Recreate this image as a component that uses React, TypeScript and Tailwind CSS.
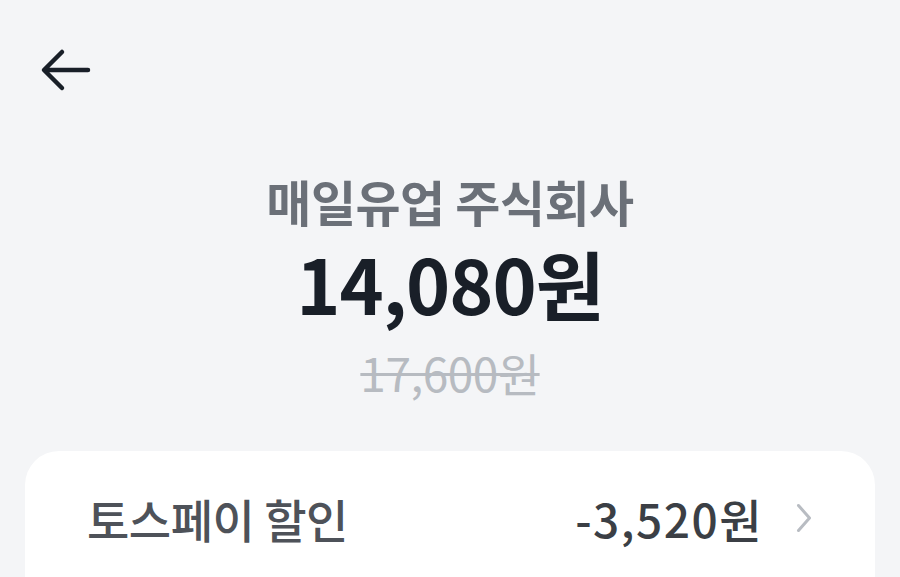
const font = { fontFamily: '"Noto Sans CJK KR", "Noto Sans", sans-serif' };

export default function App() {
  return (
    <main
      className="h-[577px] w-[900px] overflow-hidden bg-[#f4f5f7] text-[#191f28]"
      style={font}
    >
      <header className="flex h-[140px] items-start px-[40px] pt-[46px]">
        <button className="text-[#191f28]">
          <svg width="52" height="48" viewBox="0 0 52 48" fill="none">
            <path
              d="M48 24H6M22 6L4 24l18 18"
              stroke="currentColor"
              strokeWidth="4.5"
              strokeLinecap="round"
              strokeLinejoin="round"
            />
          </svg>
        </button>
      </header>

      <section className="flex flex-col items-center">
        <h1 className="mt-[36px] text-[49px] font-semibold leading-none tracking-[-0.5px] text-[#6b7078]">
          매일유업 주식회사
        </h1>
        <p className="mt-[20px] text-[75px] font-bold leading-none tracking-[-1px]">
          14,080원
        </p>
        <p className="mt-[29px] text-[46px] font-normal leading-none tracking-[-0.5px] text-[#b7bbc1] line-through decoration-[3px]">
          17,600원
        </p>
      </section>

      <div className="mx-[25px] mt-[56px] h-[200px] rounded-[34px] bg-white pl-[62px] pr-[63px] pt-[44px]">
        <div className="flex items-center justify-between">
          <span className="text-[46px] font-medium leading-none tracking-[-0.5px] text-[#4e5259]">
            토스페이 할인
          </span>
          <span className="flex items-center gap-[33px]">
            <span className="text-[46px] font-medium leading-none tracking-[1.5px] text-[#3b3f45]">
              -3,520원
            </span>
            <svg width="16" height="30" viewBox="0 0 16 30" fill="none" className="text-[#b8bcc2]">
              <path
                d="M2.5 2.5L13.5 15L2.5 27.5"
                stroke="currentColor"
                strokeWidth="3"
                strokeLinecap="round"
                strokeLinejoin="round"
              />
            </svg>
          </span>
        </div>
      </div>
    </main>
  );
}
